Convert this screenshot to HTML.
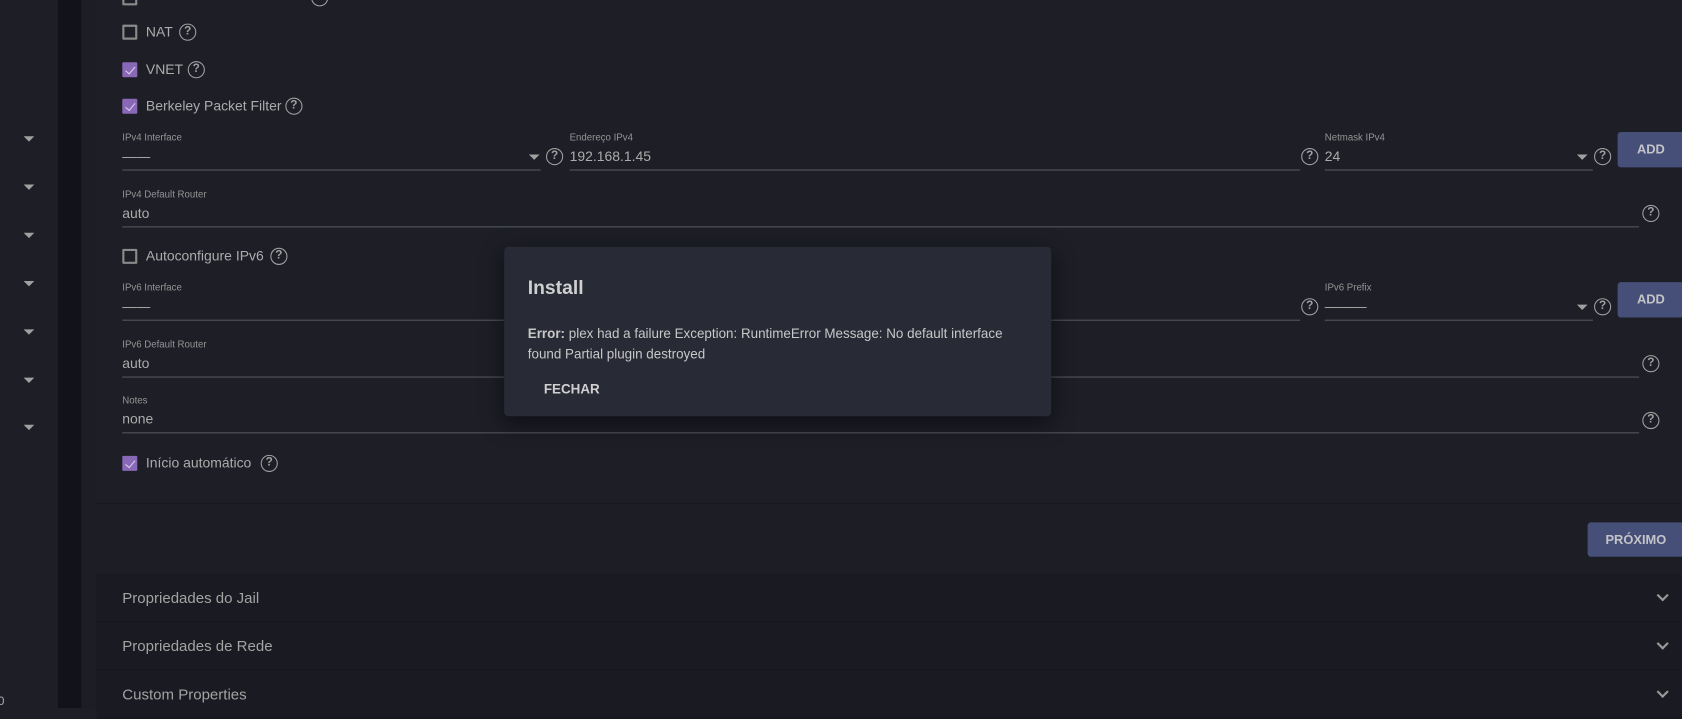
<!DOCTYPE html>
<html><head><meta charset="utf-8"><style>
*{margin:0;padding:0;box-sizing:border-box}
html,body{width:1682px;height:708px;overflow:hidden;background:#1d1e26}
#w{position:absolute;left:0;top:0;width:1568px;height:660px;transform:scale(1.07270);transform-origin:0 0;font-family:"Liberation Sans",sans-serif;color:#bdbdbd}
.a{position:absolute}
.cb{position:absolute;width:14px;height:14px;border:2px solid #8a8a8a;border-radius:1px}
.cb.on{background:#8a68b8;border-color:#8a68b8}
.cb.on:after{content:"";position:absolute;left:3px;top:0px;width:4px;height:8px;border:solid #d8d0e8;border-width:0 1.5px 1.5px 0;transform:rotate(40deg)}
.t{position:absolute;font-size:13px;color:#acacac;white-space:nowrap}
.lbl{position:absolute;font-size:9px;color:#959595;white-space:nowrap}
.val{position:absolute;font-size:13px;color:#acacac;white-space:nowrap}
.ul{position:absolute;height:1px;background:#555760}
.q{position:absolute;width:16px;height:16px;border:1.8px solid #a0a0a0;border-radius:50%;font-size:11px;font-weight:bold;color:#a0a0a0;text-align:center;line-height:13px}
.car{position:absolute;width:0;height:0;border-left:5px solid transparent;border-right:5px solid transparent;border-top:5px solid #a0a0a0}
.btn{position:absolute;background:#454f78;border-radius:3px;color:#c3c3c8;font-weight:bold;font-size:12px;text-align:center}
.sec{position:absolute;left:90px;width:1478px;height:45px;background:#1a1b22;border-bottom:1px solid #16171d}
.sec span{position:absolute;left:24px;top:14px;font-size:14px;color:#a3a3a3}
.chev{position:absolute;right:14px;top:16px;width:8px;height:8px;border:solid #999;border-width:0 2px 2px 0;transform:rotate(45deg)}
</style></head><body><div id="w">
<div class="a" style="left:0;top:0;width:54px;height:660px;background:#1d1e26"></div>
<div class="a" style="left:54px;top:0;width:22px;height:660px;background:#12131a"></div>
<div class="a" style="left:76px;top:0;width:1492px;height:660px;background:#1c1d25"></div>
<div class="a" style="left:90px;top:0;width:1478px;height:470px;background:#1d1e26;border-bottom:1px solid #18191f"></div>
<div class="a" style="left:90px;top:470px;width:1478px;height:65px;background:#1c1d25"></div>
<div class="car" style="left:22px;top:127px"></div><div class="car" style="left:22px;top:172px"></div><div class="car" style="left:22px;top:217px"></div><div class="car" style="left:22px;top:262px"></div><div class="car" style="left:22px;top:307px"></div><div class="car" style="left:22px;top:352px"></div><div class="car" style="left:22px;top:396px"></div>
<div class="t" style="left:-2px;top:648px;font-size:11px">0</div>

<div class="cb" style="left:114px;top:-9px"></div><div class="q" style="left:290px;top:-10px">?</div>
<div class="cb" style="left:114px;top:23px"></div><div class="t" style="left:136px;top:22px">NAT</div><div class="q" style="left:167px;top:22px">?</div>
<div class="cb on" style="left:114px;top:58px"></div><div class="t" style="left:136px;top:57px">VNET</div><div class="q" style="left:175px;top:57px">?</div>
<div class="cb on" style="left:114px;top:92px"></div><div class="t" style="left:136px;top:91px">Berkeley Packet Filter</div><div class="q" style="left:266px;top:91px">?</div>

<div class="lbl" style="left:114px;top:123px">IPv4 Interface</div><div class="val" style="left:114px;top:138px">——</div><div class="car" style="left:493px;top:144px"></div><div class="ul" style="left:114px;top:158px;width:390px"></div><div class="q" style="left:509px;top:138px">?</div>
<div class="lbl" style="left:531px;top:123px">Endereço IPv4</div><div class="val" style="left:531px;top:138px">192.168.1.45</div><div class="ul" style="left:531px;top:158px;width:681px"></div><div class="q" style="left:1213px;top:138px">?</div>
<div class="lbl" style="left:1235px;top:123px">Netmask IPv4</div><div class="val" style="left:1235px;top:138px">24</div><div class="car" style="left:1470px;top:144px"></div><div class="ul" style="left:1235px;top:158px;width:250px"></div><div class="q" style="left:1486px;top:138px">?</div>
<div class="btn" style="left:1508px;top:123px;width:62px;height:33px;line-height:33px">ADD</div>

<div class="lbl" style="left:114px;top:176px">IPv4 Default Router</div><div class="val" style="left:114px;top:191px">auto</div><div class="ul" style="left:114px;top:211px;width:1414px"></div><div class="q" style="left:1531px;top:191px">?</div>

<div class="cb" style="left:114px;top:232px"></div><div class="t" style="left:136px;top:231px">Autoconfigure IPv6</div><div class="q" style="left:252px;top:231px">?</div>

<div class="lbl" style="left:114px;top:263px">IPv6 Interface</div><div class="val" style="left:114px;top:278px">——</div><div class="ul" style="left:114px;top:298px;width:1098px"></div><div class="q" style="left:1213px;top:278px">?</div>
<div class="lbl" style="left:1235px;top:263px">IPv6 Prefix</div><div class="val" style="left:1235px;top:278px">———</div><div class="car" style="left:1470px;top:284px"></div><div class="ul" style="left:1235px;top:298px;width:250px"></div><div class="q" style="left:1486px;top:278px">?</div>
<div class="btn" style="left:1508px;top:263px;width:62px;height:33px;line-height:33px">ADD</div>

<div class="lbl" style="left:114px;top:316px">IPv6 Default Router</div><div class="val" style="left:114px;top:331px">auto</div><div class="ul" style="left:114px;top:351px;width:1414px"></div><div class="q" style="left:1531px;top:331px">?</div>
<div class="lbl" style="left:114px;top:368px">Notes</div><div class="val" style="left:114px;top:383px">none</div><div class="ul" style="left:114px;top:403px;width:1414px"></div><div class="q" style="left:1531px;top:384px">?</div>

<div class="cb on" style="left:114px;top:425px"></div><div class="t" style="left:136px;top:424px">Início automático</div><div class="q" style="left:243px;top:424px">?</div>

<div class="btn" style="left:1480px;top:487px;width:90px;height:32px;line-height:32px">PRÓXIMO</div>

<div class="sec" style="top:535px"><span>Propriedades do Jail</span><i class="chev"></i></div>
<div class="sec" style="top:580px"><span>Propriedades de Rede</span><i class="chev"></i></div>
<div class="sec" style="top:625px"><span>Custom Properties</span><i class="chev"></i></div>

<div class="a" style="left:470px;top:230px;width:510px;height:158px;background:#282a36;border-radius:4px;box-shadow:0 6px 20px rgba(0,0,0,.5)">
<div class="a" style="left:22px;top:28px;font-size:18px;font-weight:bold;color:#d0d0d0">Install</div>
<div class="a" style="left:22px;top:72px;width:470px;font-size:12.5px;line-height:19px;color:#c8c8c8"><b>Error:</b> plex had a failure Exception: RuntimeError Message: No default interface found Partial plugin destroyed</div>
<div class="a" style="left:37px;top:126px;font-size:12.5px;font-weight:bold;color:#d0d0d0">FECHAR</div>
</div>
</div></body></html>
